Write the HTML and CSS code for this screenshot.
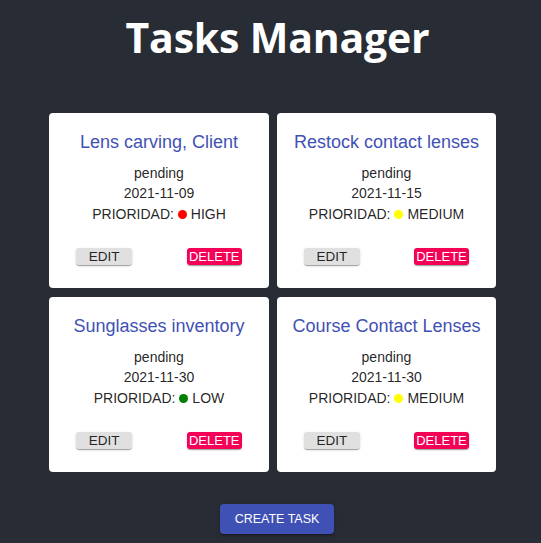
FILE: index.html
```html
<!DOCTYPE html>
<html>
<head>
<meta charset="utf-8">
<link rel="stylesheet" href="styles.css">
</head>
<body>
<div class="app">
  <h1 class="title">Tasks Manager</h1>
  <div class="grid">
    <div class="card">
      <h2 class="card-title">Lens carving, Client</h2>
      <p class="line">pending</p>
      <p class="line">2021-11-09</p>
      <p class="line">PRIORIDAD: <span class="dot dot-high"></span>HIGH</p>
      <div class="actions">
        <button class="btn btn-edit">EDIT</button>
        <button class="btn btn-delete">DELETE</button>
      </div>
    </div>
    <div class="card">
      <h2 class="card-title">Restock contact lenses</h2>
      <p class="line">pending</p>
      <p class="line">2021-11-15</p>
      <p class="line">PRIORIDAD: <span class="dot dot-medium"></span>MEDIUM</p>
      <div class="actions">
        <button class="btn btn-edit">EDIT</button>
        <button class="btn btn-delete">DELETE</button>
      </div>
    </div>
    <div class="card">
      <h2 class="card-title">Sunglasses inventory</h2>
      <p class="line">pending</p>
      <p class="line">2021-11-30</p>
      <p class="line">PRIORIDAD: <span class="dot dot-low"></span>LOW</p>
      <div class="actions">
        <button class="btn btn-edit">EDIT</button>
        <button class="btn btn-delete">DELETE</button>
      </div>
    </div>
    <div class="card">
      <h2 class="card-title">Course Contact Lenses</h2>
      <p class="line">pending</p>
      <p class="line">2021-11-30</p>
      <p class="line">PRIORIDAD: <span class="dot dot-medium"></span>MEDIUM</p>
      <div class="actions">
        <button class="btn btn-edit">EDIT</button>
        <button class="btn btn-delete">DELETE</button>
      </div>
    </div>
  </div>
  <div class="footer">
    <button class="btn-create">CREATE TASK</button>
  </div>
</div>
</body>
</html>
```

FILE: styles.css
```css
html, body {
  margin: 0;
  padding: 0;
  background: #282c34;
}
body {
  font-family: "Liberation Sans", Arial, sans-serif;
  min-height: 543px;
}
.app {
  display: flex;
  flex-direction: column;
  align-items: center;
}
.title {
  margin: 0;
  padding-top: 9px;
  padding-left: 14px;
  font-family: "Open Sans", sans-serif;
  font-weight: 700;
  font-size: 41px;
  line-height: 56px;
  letter-spacing: -0.2px;
  color: #ffffff;
  text-align: center;
}
.grid {
  margin-top: 48px;
  padding-left: 4px;
  display: grid;
  grid-template-columns: 220px 219px;
  column-gap: 8px;
  row-gap: 9px;
}
.card {
  background: #ffffff;
  border-radius: 4px;
  height: 175px;
  box-sizing: border-box;
  padding-top: 16px;
  text-align: center;
  color: rgba(0, 0, 0, 0.87);
}
.card-title {
  margin: 0 0 6.5px;
  font-size: 18px;
  font-weight: 400;
  line-height: 27px;
  color: #3f51b5;
}
.line {
  margin: 0;
  font-size: 14px;
  line-height: 20.5px;
}
.dot {
  display: inline-block;
  width: 9px;
  height: 9px;
  border-radius: 50%;
  margin-right: 4px;
}
.dot-high { background: #ff0000; }
.dot-medium { background: #ffff00; }
.dot-low { background: #008000; }
.actions {
  margin-top: 24px;
  display: flex;
  justify-content: space-around;
}
.btn {
  font-family: "Liberation Sans", Arial, sans-serif;
  font-size: 13px;
  height: 17px;
  width: 56px;
  padding: 0;
  border: none;
  border-radius: 3px;
  line-height: 17px;
  cursor: pointer;
}
.btn-edit {
  font-size: 13.5px;
  background: #e0e0e0;
  color: rgba(0, 0, 0, 0.87);
  box-shadow: 0 2px 1px -1px rgba(0,0,0,0.2), 0 1px 1px 0 rgba(0,0,0,0.14), 0 1px 3px 0 rgba(0,0,0,0.12);
}
.btn-delete {
  width: 55px;
  background: #f50057;
  color: #ffffff;
  box-shadow: 0 2px 1px -1px rgba(0,0,0,0.2), 0 1px 1px 0 rgba(0,0,0,0.14), 0 1px 3px 0 rgba(0,0,0,0.12);
}
.footer {
  margin-top: 32px;
  padding-left: 13px;
}
.btn-create {
  width: 114px;
  height: 30px;
  padding: 0;
  border: none;
  border-radius: 4px;
  background: #3f51b5;
  color: #ffffff;
  font-family: "Liberation Sans", Arial, sans-serif;
  font-size: 12.5px;
  box-shadow: 0 3px 1px -2px rgba(0,0,0,0.2), 0 2px 2px 0 rgba(0,0,0,0.14), 0 1px 5px 0 rgba(0,0,0,0.12);
}
```
